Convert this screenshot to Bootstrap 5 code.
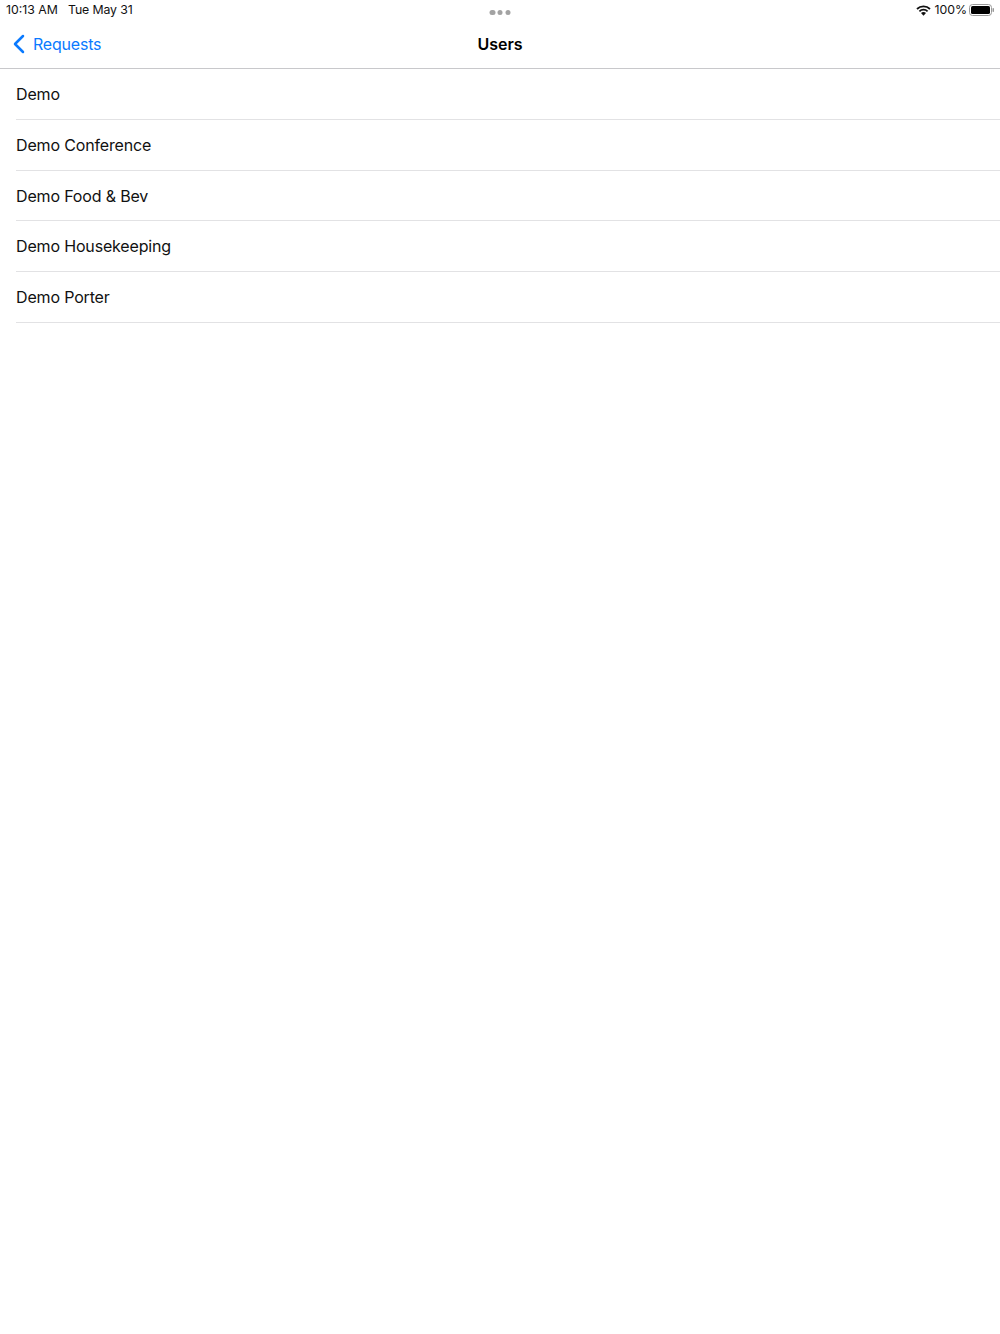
<!DOCTYPE html>
<html lang="en">
<head>
  <meta charset="UTF-8">
  <title>Users</title>
  <link href="https://cdn.jsdelivr.net/npm/bootstrap@5.3.2/dist/css/bootstrap.min.css" rel="stylesheet">
  <style>
    body { background-color: #fff; color: #000; font-family: Inter, "Liberation Sans", sans-serif; }
    .status-bar { height: 20px; padding: 0 5px 0 6px; font-size: 12.3px; line-height: 20px; color: #111; }
    .status-day { margin-left: 2px; letter-spacing: -0.1px; }
    .status-dots { width: 21px; margin-top: 9.5px; }
    .status-dots i { width: 5.5px; height: 5.5px; border-radius: 50%; background-color: #a3a3a3; display: block; }
    .status-right { gap: 3px; }
    .status-pct { margin-right: -1px; }
    .nav-head { height: 49px; border-bottom: 1px solid #c8c8cb; }
    .back-link { color: #0a7aff; font-size: 16px; letter-spacing: -0.2px; left: 12px; top: 0; height: 48px; gap: 8px; text-decoration: none; }
    .head-title { font-size: 16px; font-weight: 600; line-height: 48px; }
    .user-row { height: 50.8px; padding-top: 0.4px; margin-left: 16px; border-bottom: 1px solid #e2e2e4; font-size: 16px; letter-spacing: -0.16px; color: #111; }
  </style>
</head>
<body>

  <div class="status-bar d-flex justify-content-between position-relative">
    <div class="d-flex gap-2"><span>10:13 AM</span><span class="status-day">Tue May 31</span></div>
    <div class="status-dots d-flex justify-content-between position-absolute start-50 translate-middle-x top-0"><i></i><i></i><i></i></div>
    <div class="status-right d-flex align-items-center">
      <svg width="15" height="11" viewBox="0 0 15 11"><path d="M1 4 A9.3 9.3 0 0 1 14 4" fill="none" stroke="#111" stroke-width="1.8"/><path d="M3.4 6.3 A6 6 0 0 1 11.6 6.3" fill="none" stroke="#111" stroke-width="1.8"/><path d="M5 8 A3.4 3.4 0 0 1 10 8 L7.5 10.8 Z" fill="#111"/></svg>
      <span class="status-pct">100%</span>
      <svg width="26" height="12" viewBox="0 0 26 12"><rect x="0.5" y="0.5" width="22" height="11" rx="3" fill="none" stroke="#999"/><rect x="2" y="2" width="19" height="8" rx="1.6" fill="#000"/><rect x="23.5" y="4" width="1.5" height="4" rx="0.7" fill="#999"/></svg>
    </div>
  </div>

  <div class="nav-head position-relative text-center">
    <a href="#" class="back-link position-absolute d-flex align-items-center">
      <svg width="13" height="20" viewBox="0 0 13 20"><path d="M11 2 L3 10 L11 18" fill="none" stroke="#0a7aff" stroke-width="2.5" stroke-linecap="round" stroke-linejoin="round"/></svg>
      <span>Requests</span>
    </a>
    <div class="head-title">Users</div>
  </div>

  <div>
    <div class="user-row d-flex align-items-center">Demo</div>
    <div class="user-row d-flex align-items-center">Demo Conference</div>
    <div class="user-row d-flex align-items-center">Demo Food &amp; Bev</div>
    <div class="user-row d-flex align-items-center">Demo Housekeeping</div>
    <div class="user-row d-flex align-items-center">Demo Porter</div>
  </div>

  <script src="https://cdn.jsdelivr.net/npm/bootstrap@5.3.2/dist/js/bootstrap.bundle.min.js"></script>
</body>
</html>
